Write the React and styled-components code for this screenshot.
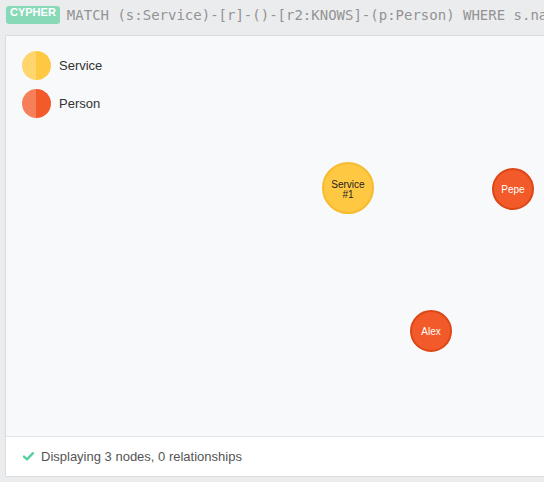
import React from "react";
import styled, { createGlobalStyle } from "styled-components";

const Global = createGlobalStyle`
  html, body { margin: 0; padding: 0; }
  body {
    background: #ebecee;
    font-family: "Liberation Sans", Arial, sans-serif;
    width: 544px;
    height: 482px;
    overflow: hidden;
  }
`;

const Page = styled.div`
  width: 544px;
  height: 482px;
  overflow: hidden;
  display: flex;
  flex-direction: column;
`;

const QueryBar = styled.div`
  display: flex;
  align-items: center;
  gap: 7px;
  height: 30px;
  padding-left: 6px;
  white-space: nowrap;
`;

const Badge = styled.span`
  flex: none;
  height: 18px;
  line-height: 19px;
  padding: 0 4px;
  border-radius: 3px;
  background: #88d9b8;
  color: #ffffff;
  font: bold 11px "Liberation Sans", Arial, sans-serif;
`;

const Query = styled.span`
  font: 14px "DejaVu Sans Mono", "Liberation Mono", monospace;
  color: #939393;
  white-space: nowrap;
`;

const Card = styled.div`
  margin: 5px 0 0 5px;
  width: 620px;
  border: 1px solid #dadbdd;
  border-radius: 2px;
  background: #ffffff;
  display: flex;
  flex-direction: column;
`;

const Canvas = styled.div`
  position: relative;
  height: 400px;
  background: #f8f9fa;
`;

const Legend = styled.div`
  display: flex;
  flex-direction: column;
  gap: 9px;
  padding: 15px 0 0 16px;
`;

const LegendItem = styled.div`
  display: flex;
  align-items: center;
  gap: 8px;
  font-size: 13px;
  color: #333333;
`;

const Swatch = styled.span`
  width: 29px;
  height: 29px;
  border-radius: 50%;
  background: linear-gradient(to right, ${p => p.$light} 50%, ${p => p.$dark} 50%);
`;

const Node = styled.div`
  position: absolute;
  box-sizing: border-box;
  display: flex;
  align-items: center;
  justify-content: center;
  text-align: center;
  border-radius: 50%;
  width: ${p => p.$size}px;
  height: ${p => p.$size}px;
  padding-top: ${p => p.$offset}px;
  background: ${p => p.$fill};
  border: 2px solid ${p => p.$stroke};
  color: ${p => p.$text};
  font: 10px/10px "Liberation Sans", Arial, sans-serif;
`;

const Footer = styled.div`
  height: 39px;
  border-top: 1px solid #e3e4e6;
  display: flex;
  align-items: center;
  gap: 7px;
  padding-left: 17px;
  font-size: 13px;
  color: #555555;
  background: #ffffff;
`;

const Check = () => (
  <svg width="11" height="9" viewBox="0 0 11 9">
    <path d="M1 4.6 L4 7.4 L10 1.2" fill="none" stroke="#57d19f" strokeWidth="2.4" strokeLinecap="round" strokeLinejoin="round" />
  </svg>
);

const nodes = [
  { id: "s", label: ["Service", "#1"], x: 316, y: 126, size: 52, fill: "#ffc843", stroke: "#f7bb30", text: "#222222", offset: 3 },
  { id: "p", label: ["Pepe"], x: 486, y: 132, size: 42, fill: "#f35a29", stroke: "#dc4717", text: "#ffffff", offset: 1 },
  { id: "a", label: ["Alex"], x: 404, y: 274, size: 42, fill: "#f35a29", stroke: "#dc4717", text: "#ffffff", offset: 1 },
];

export default function App() {
  return (
    <>
      <Global />
      <Page>
        <QueryBar>
          <Badge>CYPHER</Badge>
          <Query>MATCH (s:Service)-[r]-()-[r2:KNOWS]-(p:Person) WHERE s.name = "Service #1" RETURN s, p</Query>
        </QueryBar>
        <Card>
          <Canvas>
            <Legend>
              <LegendItem>
                <Swatch $light="#ffd66e" $dark="#ffc843" />
                Service
              </LegendItem>
              <LegendItem>
                <Swatch $light="#f67e58" $dark="#f35a29" />
                Person
              </LegendItem>
            </Legend>
            {nodes.map(n => (
              <Node
                key={n.id}
                style={{ left: n.x, top: n.y }}
                $size={n.size}
                $fill={n.fill}
                $stroke={n.stroke}
                $text={n.text}
                $offset={n.offset}
              >
                <div>
                  {n.label.map((l, i) => (
                    <div key={i}>{l}</div>
                  ))}
                </div>
              </Node>
            ))}
          </Canvas>
          <Footer>
            <Check />
            Displaying 3 nodes, 0 relationships
          </Footer>
        </Card>
      </Page>
    </>
  );
}
